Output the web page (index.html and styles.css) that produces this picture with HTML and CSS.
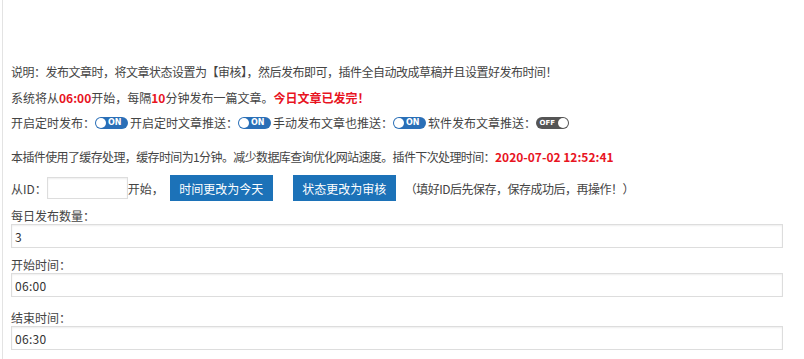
FILE: index.html
```html
<!DOCTYPE html>
<html lang="zh-CN">
<head>
<meta charset="utf-8">
<title>定时发布</title>
<link rel="stylesheet" href="styles.css">
</head>
<body>
<div class="wrap">
  <p class="line desc tight">说明：发布文章时，将文章状态设置为【审核】，然后发布即可，插件全自动改成草稿并且设置好发布时间！</p>
  <p class="line l2">系统将从<b class="red">06:00</b>开始，每隔<b class="red">10</b>分钟发布一篇文章。<b class="red">今日文章已发完！</b></p>
  <div class="line toggles">
    <span>开启定时发布：</span><span class="sw on"><i class="knob"></i><em>ON</em></span>
    <span class="lbl">开启定时文章推送：</span><span class="sw on"><i class="knob"></i><em>ON</em></span>
    <span class="lbl">手动发布文章也推送：</span><span class="sw on"><i class="knob"></i><em>ON</em></span>
    <span class="lbl">软件发布文章推送：</span><span class="sw off"><em>OFF</em><i class="knob"></i></span>
  </div>
  <p class="line l4">本插件使用了缓存处理，缓存时间为1分钟。减少数据库查询优化网站速度。插件下次处理时间：<b class="red date">2020-07-02 12:52:41</b></p>
  <div class="idrow">
    <span>从ID：</span><input class="idinput" type="text" value=""><span>开始，</span>
    <button class="btn b1" type="button">时间更改为今天</button>
    <button class="btn b2" type="button">状态更改为审核</button>
    <span class="note tight">（填好ID后先保存，保存成功后，再操作！）</span>
  </div>
  <div class="field f1">
    <label>每日发布数量：</label>
    <input class="full" type="text" value="3">
  </div>
  <div class="field f2">
    <label>开始时间：</label>
    <input class="full time" type="text" value="06:00">
  </div>
  <div class="field f3">
    <label>结束时间：</label>
    <input class="full time" type="text" value="06:30">
  </div>
</div>
</body>
</html>
```

FILE: styles.css
```css
html, body {
  margin: 0;
  padding: 0;
  background: #fff;
}
body {
  font-family: "Noto Sans CJK SC", "Microsoft YaHei", sans-serif;
  font-size: 12px;
  color: #444;
}
.wrap {
  margin-left: 2px;
  border-left: 1px solid #e3e3e3;
  padding: 62px 21px 0 8px;
  height: 297px;
}
.line {
  margin: 0;
  line-height: 20px;
  white-space: nowrap;
}
.tight { letter-spacing: -0.5px; }
.l2 { margin-top: 6px; }
.toggles {
  margin-top: 5px;
  display: flex;
  align-items: center;
}
.red {
  color: #e8141f;
  font-weight: bold;
  font-family: "Noto Sans CJK SC", sans-serif;
}
.lbl { margin-left: 2px; }
.sw {
  display: inline-flex;
  align-items: center;
  width: 33px;
  height: 12px;
  border-radius: 6px;
  box-sizing: border-box;
  padding: 0 1px;
  gap: 2px;
}
.sw.on { background: #2a6fb7; }
.sw.off { background: #555; justify-content: flex-end; }
.sw .knob {
  width: 10px;
  height: 10px;
  border-radius: 50%;
  background: #fff;
  flex: none;
}
.sw em {
  font-style: normal;
  font-family: "DejaVu Sans", sans-serif;
  font-weight: bold;
  font-size: 8px;
  line-height: 12px;
  color: #fff;
}
.sw.off em { margin-right: 1px; font-size: 7px; }
.l4 { margin-top: 14px; letter-spacing: -0.62px; }
.l4 .date { letter-spacing: 0; }
.idrow {
  margin-top: 8px;
  display: flex;
  align-items: center;
  height: 26px;
  white-space: nowrap;
}
.idinput {
  width: 81px;
  height: 22px;
  box-sizing: border-box;
  border: 1px solid #ddd;
  box-shadow: inset 0 1px 2px rgba(0,0,0,.07);
  margin: 0;
  padding: 0 4px;
  font: inherit;
}
.btn {
  height: 26px;
  width: 103px;
  border: 0;
  padding: 0;
  background: #1c72b8;
  color: #fff;
  font: inherit;
  font-size: 12px;
  cursor: pointer;
}
.b1 { margin-left: 6px; }
.b2 { margin-left: 20px; }
.note { margin-left: 9px; }
.field label {
  display: block;
  line-height: 16px;
}
.field.f1 { margin-top: 7px; }
.field.f2 { margin-top: 9px; }
.field.f3 { margin-top: 13px; }
.full {
  display: block;
  width: 100%;
  height: 24px;
  box-sizing: border-box;
  margin: 0;
  border: 1px solid #ddd;
  box-shadow: inset 0 1px 2px rgba(0,0,0,.07);
  padding: 0 3px;
  font: inherit;
  font-size: 12px;
  color: #333;
}
.time { letter-spacing: 0.3px; }
```
